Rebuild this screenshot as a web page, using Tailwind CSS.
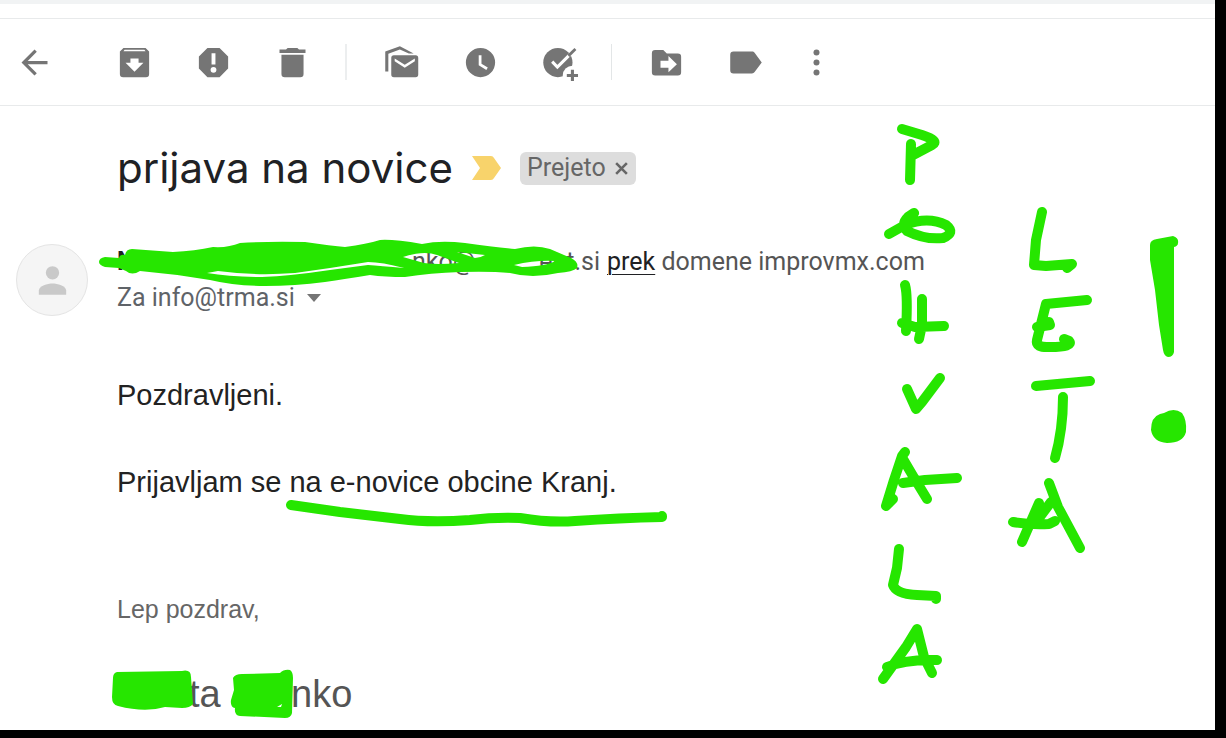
<!DOCTYPE html>
<html lang="sl">
<head>
  <meta charset="UTF-8">
  <meta name="viewport" content="width=device-width, initial-scale=1.0">
  <title>prijava na novice</title>
  <script src="https://cdn.jsdelivr.net/npm/@tailwindcss/browser@4"></script>
</head>
<body class="relative flex min-h-screen flex-col overflow-x-hidden bg-black pr-[11px] pb-2 font-['Roboto',sans-serif]">
  <main class="flex-1 bg-white">
    <div class="h-1 bg-[#f1f3f4]"></div>

    <!-- Toolbar -->
    <nav class="mt-[14px] flex h-[88px] items-center border-y border-[#e8eaeb] pl-[15px] text-[#757575]">
      <button aria-label="Nazaj" class="size-[39px]"><svg viewBox="0 0 24 24" fill="currentColor"><path d="M20 11H7.83l5.59-5.59L12 4l-8 8 8 8 1.41-1.41L7.83 13H20z"/></svg></button>
      <div class="ml-[61px] flex gap-10">
        <button aria-label="Arhiviraj" class="size-[39px]"><svg viewBox="0 0 24 24" fill="currentColor"><path fill-rule="evenodd" d="M5.2 3h13.6L21 5.3V19a2 2 0 0 1-2 2H5a2 2 0 0 1-2-2V5.300zM5.900 4.100 5.200 5.100H18.800L18.100 4.100zM12 17.700l5.500-5.500H14.500V9.600H9.500v2.600H6.500z"/></svg></button>
        <button aria-label="Prijavi vsiljeno pošto" class="size-[39px]"><svg viewBox="0 0 24 24" fill="currentColor"><path fill-rule="evenodd" d="M15.730 3H8.270L3 8.270v7.460L8.270 21h7.460L21 15.730V8.270zM12 18.300a1.800 1.800 0 1 1 0-3.600 1.800 1.800 0 0 1 0 3.600zM13.200 13.200h-2.400V6.300h2.400z"/></svg></button>
        <button aria-label="Izbriši" class="size-[39px]"><svg viewBox="0 0 24 24" fill="currentColor"><path d="M5.200 19a2 2 0 0 0 2 2h9.600a2 2 0 0 0 2-2V7.200H5.200zM20 4h-4l-1-1H9L8 4H4v2.200h16z"/></svg></button>
      </div>
      <div class="mr-[35px] ml-[33px] h-9 w-[2px] bg-[#eceeef]"></div>
      <div class="flex gap-10">
        <button aria-label="Označi kot neprebrano" class="size-[39px]"><svg viewBox="0 0 24 24" fill="currentColor"><path d="M2 17.500h1.900V6.600L11 4l5.500 2.400h3L11 2 2 5.200z"/><path fill-rule="evenodd" d="M7.300 7.600h13.400a1.600 1.600 0 0 1 1.600 1.600v10.200a1.600 1.600 0 0 1-1.600 1.600H7.300a1.600 1.600 0 0 1-1.600-1.600V9.200a1.600 1.600 0 0 1 1.600-1.600zM7.800 9.600v1.700l6.200 4 6.200-4V9.600L14 13.400z"/></svg></button>
        <button aria-label="Preloži" class="size-[39px]"><svg viewBox="0 0 24 24" fill="currentColor"><path fill-rule="evenodd" d="M12 3a9 9 0 1 0 0 18 9 9 0 0 0 0-18zM10.900 7.500h1.700v5.200l3.900 2.400-.9 1.500-4.700-2.900z"/></svg></button>
        <button aria-label="Dodaj med opravila" class="size-[39px]"><svg viewBox="0 0 24 24" class="overflow-visible" fill="currentColor"><circle cx="11" cy="12" r="9"/><circle cx="20" cy="20" r="6" fill="white"/><path d="M7.500 11.500l3.200 3.300L21 4.500" fill="none" stroke="white" stroke-width="1.900"/><path d="M16.900 7.300l4.300-4.200 1.200 1.200-4.300 4.300z"/><path d="M19 16.500h1.900v2.500h2.500v1.900h-2.500v2.500H19v-2.500h-2.500V19H19z"/></svg></button>
      </div>
      <div class="mr-[35px] ml-[32px] h-9 w-px bg-[#e3e6e7]"></div>
      <div class="flex gap-10">
        <button aria-label="Premakni v" class="size-[39px]"><svg viewBox="0 0 24 24" fill="currentColor"><path fill-rule="evenodd" d="M5 4.300h5L12.200 6.400H19a2 2 0 0 1 2 2V18a2 2 0 0 1-2 2H5a2 2 0 0 1-2-2V6.300a2 2 0 0 1 2-2zM13.200 18l5.200-5-5.200-5v2.900H8.300v4.400h4.900z"/></svg></button>
        <button aria-label="Oznake" class="size-[39px]"><svg viewBox="0 0 24 24" fill="currentColor"><path d="M4.600 5.200h11.400c.7 0 1.200.3 1.600.8L22 12l-4.400 5.900c-.4.500-.9.800-1.600.8H4.600a2 2 0 0 1-2-2V7.200a2 2 0 0 1 2-2z"/></svg></button>
        <button aria-label="Več" class="-ml-2 size-[39px]"><svg viewBox="0 0 24 24" fill="currentColor"><circle cx="12" cy="5.900" r="1.850"/><circle cx="12" cy="12" r="1.850"/><circle cx="12" cy="18.100" r="1.850"/></svg></button>
      </div>
    </nav>

    <!-- Subject -->
    <header class="mt-8 flex h-[60px] items-center pl-[117px]">
      <h1 class="font-['Inter',sans-serif] text-[42px] leading-[60px] text-[#202124]">prijava na novice</h1>
      <svg class="ml-[19px] h-6 w-[29px]" viewBox="0 0 29 24" fill="#f8d36b" aria-hidden="true"><path d="M0 0h19q2 0 3 2l7 10-7 10q-1 2-3 2H0l8-12z"/></svg>
      <span class="ml-[19px] flex h-[33px] items-center gap-2 rounded-md bg-[#ddd] px-[7px] text-[25px] text-[#666]">Prejeto
        <button aria-label="Odstrani oznako"><svg class="size-[15px]" viewBox="0 0 14 14" stroke="currentColor" stroke-width="2.400"><path d="M2 2l10 10M12 2L2 12"/></svg></button>
      </span>
    </header>

    <!-- Sender -->
    <section class="mt-[46px] flex pl-4">
      <div class="flex size-[72px] items-center justify-center rounded-full border border-[#e4e4e4] bg-[#f5f5f5]">
        <svg class="size-[41px]" viewBox="0 0 24 24" fill="#c9c9c9" aria-hidden="true"><circle cx="12" cy="7.500" r="3.900"/><path d="M4 20.300v-2.500c0-2.600 5.200-4.100 8-4.100s8 1.500 8 4.100v2.500z"/></svg>
      </div>
      <div class="ml-[29px] text-[25px] leading-9 text-[#5f6368]">
        <p class="flex whitespace-pre text-[#555]">
          <b class="w-[295px] text-[#202124]">N</b><span class="w-[106px]">nko@</span><span class="w-[82px] text-right">ent.si</span><span class="pl-[7px]"><a href="#" class="text-[#202124] underline underline-offset-4 decoration-1">prek</a> domene improvmx.com</span>
        </p>
        <p class="flex items-center gap-3">Za info@trma.si
          <button aria-label="Pokaži podrobnosti" class="border-x-[7px] border-t-8 border-x-transparent border-t-[#757575]"></button>
        </p>
      </div>
    </section>

    <!-- Message -->
    <article class="mt-[58px] pl-[117px] font-['Liberation_Sans',sans-serif] text-[#222]">
      <p class="text-[29px] leading-[43px]">Pozdravljeni.</p>
      <p class="mt-[44px] text-[29px] leading-[43px]">Prijavljam se na e-novice obcine Kranj.</p>
      <p class="mt-[87px] text-[25px] leading-[36px] text-[#666]">Lep pozdrav,</p>
      <p class="mt-10 flex pl-[72px] text-[38px] leading-[54px] text-[#555]"><span class="w-[102px]">ta</span><span>nko</span></p>
    </article>
  </main>

  <!-- Freehand ink -->
  <svg class="pointer-events-none absolute top-0 left-0 h-[738px] w-[1226px]" viewBox="0 0 1226 738" fill="none" stroke="#26e600" stroke-width="10" stroke-linecap="round" stroke-linejoin="round" aria-hidden="true">
    <g fill="#26e600" stroke="none">
      <path fill-rule="evenodd" d="M105 257L119 258Q120 254 125 255Q126 249 132 249L173 252Q195 251 213 247Q228 248 240 243Q270 241 305 242Q332 246 345 247Q367 244 380 240Q393 239 422 244Q440 240 465 243Q495 247 515 249Q535 244 550 249L571 258Q579 262 577 268Q573 272 558 273Q532 279 510 273Q490 271 460 272Q430 273 405 277Q385 277 370 275Q345 279 325 282Q295 286 265 286Q235 286 210 280Q175 274 140 271Q132 276 126 271L119 268L105 267Q99 265 99 262Q99 258 105 257zM207 273L218 271Q255 276 295 273L330 268L368 262Q382 262 404 268Q380 266 368 265L330 270Q290 276 262 277Q230 277 207 273zM403 257Q424 250 437 255L459 263Q437 265 424 263zM457 252L485 255Q480 258 475 258zM514 265Q536 260 555 261Q547 266 522 267z"/>
      <path d="M117 672L182 671Q191 669 191 677L193 704Q190 708 182 708L165 707Q145 713 118 706Q112 705 112 697L113 678Q113 673 117 672z"/>
      <path fill-rule="evenodd" d="M233 678Q235 674 242 674L280 673Q284 669 290 670Q293 672 293 678L292 713Q291 718 285 718L240 716Q234 715 235 708Q230 707 231 700L234 690zM277 707L282 704L281 707z"/>
      <path d="M1150 245Q1150 240 1157 239L1173 236Q1179 238 1178 243Q1178 246 1174 247V352Q1173 357 1168 357Q1164 356 1163 350L1159 325L1155 290L1150 260z"/>
      <path d="M1160 414L1164 413Q1174 407 1182 413Q1187 420 1186 432Q1183 443 1167 443Q1153 442 1151 430Q1151 417 1160 414z"/>
    </g>
    <path d="M291 505L340 512L400 519Q430 523 470 520Q495 517 520 518Q550 523 575 521Q620 518 662 517V516"/>
    <!-- left column -->
    <path d="M902 129L922 135Q940 141 932 145L913 155M911 144L910 180"/>
    <path d="M889 234L905 225Q928 216 946 225Q956 233 943 238Q925 240 907 231Q901 224 908 217L914 213L906 222"/>
    <path d="M905 285Q908 295 906 331M922 299L922 325L919 339M902 323L915 327L944 326"/>
    <path d="M907 389L916 409L922 402L940 378"/>
    <path d="M905 452L902 456L894 480L886 506L893 499M903 459L913 476L927 499M903 483L925 480L957 478"/>
    <path d="M899 549L897 568L893 585Q896 594 917 595L936 596V599"/>
    <path d="M917 629L906 647L883 679M917 629L924 657L932 673M887 667Q905 659 937 660"/>
    <!-- right column -->
    <path d="M1042 212L1036 240L1034 265L1046 266L1072 264L1067 268"/>
    <path d="M1087 300L1046 304L1037 340Q1035 348 1050 347Q1074 347 1069 341L1064 339M1037 327L1050 325L1049 322"/>
    <path d="M1036 386L1090 381M1063 397Q1063 430 1055 458"/>
    <path d="M1049 483L1058 507L1080 548M1039 503L1022 542M1051 502L1036 522M1013 522Q1030 525 1049 524L1055 521"/>
  </svg>
</body>
</html>
